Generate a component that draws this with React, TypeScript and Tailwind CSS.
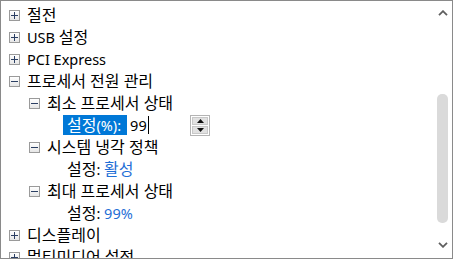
import React from "react";

type RowProps = {
  level: number;
  open?: boolean;
  children: React.ReactNode;
};

const ToggleBox = ({ open }: { open: boolean }) => (
  <span className="w-[11px] h-[11px] shrink-0 border border-[#9a9a9a] bg-gradient-to-b from-white to-[#e6e6e6] flex items-center justify-center">
    <svg width="7" height="7" viewBox="0 0 7 7">
      <rect x="0" y="3" width="7" height="1" fill="#2b3f63" />
      {!open && <rect x="3" y="0" width="1" height="7" fill="#2b3f63" />}
    </svg>
  </span>
);

const Row = ({ level, open, children }: RowProps) => {
  const pad = level === 0 ? "pl-[8px]" : level === 1 ? "pl-[28px]" : "pl-[62px]";
  return (
    <div className={`h-[22px] flex items-center shrink-0 whitespace-nowrap ${pad}`}>
      {open !== undefined && <ToggleBox open={open} />}
      <div className={open !== undefined ? "ml-[7px]" : ""}>{children}</div>
    </div>
  );
};

// latin runs are set a bit smaller so they keep the width of the original font
const L = ({ children }: { children: React.ReactNode }) => (
  <span className="text-[14.5px]">{children}</span>
);

const Chevron = ({ up }: { up: boolean }) => (
  <svg width="10" height="6" viewBox="0 0 10 6">
    <path
      d={up ? "M1 5.2 L5 1.2 L9 5.2" : "M1 0.8 L5 4.8 L9 0.8"}
      stroke="#5f5f5f"
      strokeWidth="1.8"
      fill="none"
    />
  </svg>
);

export default function App() {
  return (
    <div className="w-[454px] h-[262px] bg-white">
      <div className="w-[453px] h-[259px] border border-[#8a8a8a] bg-white flex overflow-hidden font-['Noto_Sans','Noto_Sans_CJK_KR',sans-serif] text-[16px] leading-[20px] text-black">
        <div className="flex-1 pt-[3px] flex flex-col overflow-hidden">
          <Row level={0} open={false}>절전</Row>
          <Row level={0} open={false}>
            <L>USB </L>설정
          </Row>
          <Row level={0} open={false}>
            <L>PCI Express</L>
          </Row>
          <Row level={0} open={true}>프로세서 전원 관리</Row>
          <Row level={1} open={true}>최소 프로세서 상태</Row>
          <div className="h-[22px] flex items-center shrink-0 pl-[62px] whitespace-nowrap">
            <div className="w-[127px] flex items-center">
              <span className="bg-[#0078d7] text-white pl-[4px] pr-[6px] h-[20px] flex items-center">
                설정<L>(%):</L>
              </span>
              <span className="ml-[3px] flex items-center">
                <L>99</L>
                <span className="ml-[1px] w-px h-[18px] bg-black" />
              </span>
            </div>
            <div className="w-[20px] h-[21px] border border-[#b4b4b4] bg-white p-[1px] flex flex-col gap-px">
              <div className="flex-1 bg-[#e1e1e1] border border-[#c8c8c8] flex items-center justify-center">
                <svg width="7" height="4" viewBox="0 0 7 4">
                  <path d="M0 4 L3.5 0 L7 4 Z" fill="#111" />
                </svg>
              </div>
              <div className="flex-1 bg-[#e1e1e1] border border-[#c8c8c8] flex items-center justify-center">
                <svg width="7" height="4" viewBox="0 0 7 4">
                  <path d="M0 0 L3.5 4 L7 0 Z" fill="#111" />
                </svg>
              </div>
            </div>
          </div>
          <Row level={1} open={true}>시스템 냉각 정책</Row>
          <Row level={2}>
            <span className="ml-[4px]">설정<L>: </L></span>
            <span className="text-[#1f6fd6]">활성</span>
          </Row>
          <Row level={1} open={true}>최대 프로세서 상태</Row>
          <Row level={2}>
            <span className="ml-[4px]">설정<L>: </L></span>
            <span className="text-[#1f6fd6]">
              <L>99%</L>
            </span>
          </Row>
          <Row level={0} open={false}>디스플레이</Row>
          <Row level={0} open={false}>멀티미디어 설정</Row>
        </div>
        <div className="w-[19px] shrink-0 flex flex-col items-center">
          <div className="mt-[9px] h-[6px] flex items-center">
            <Chevron up={true} />
          </div>
          <div className="mt-[78px] w-[11px] h-[129px] rounded-[5px] bg-[#dadada]" />
          <div className="mt-[19px] h-[6px] flex items-center">
            <Chevron up={false} />
          </div>
        </div>
      </div>
    </div>
  );
}
